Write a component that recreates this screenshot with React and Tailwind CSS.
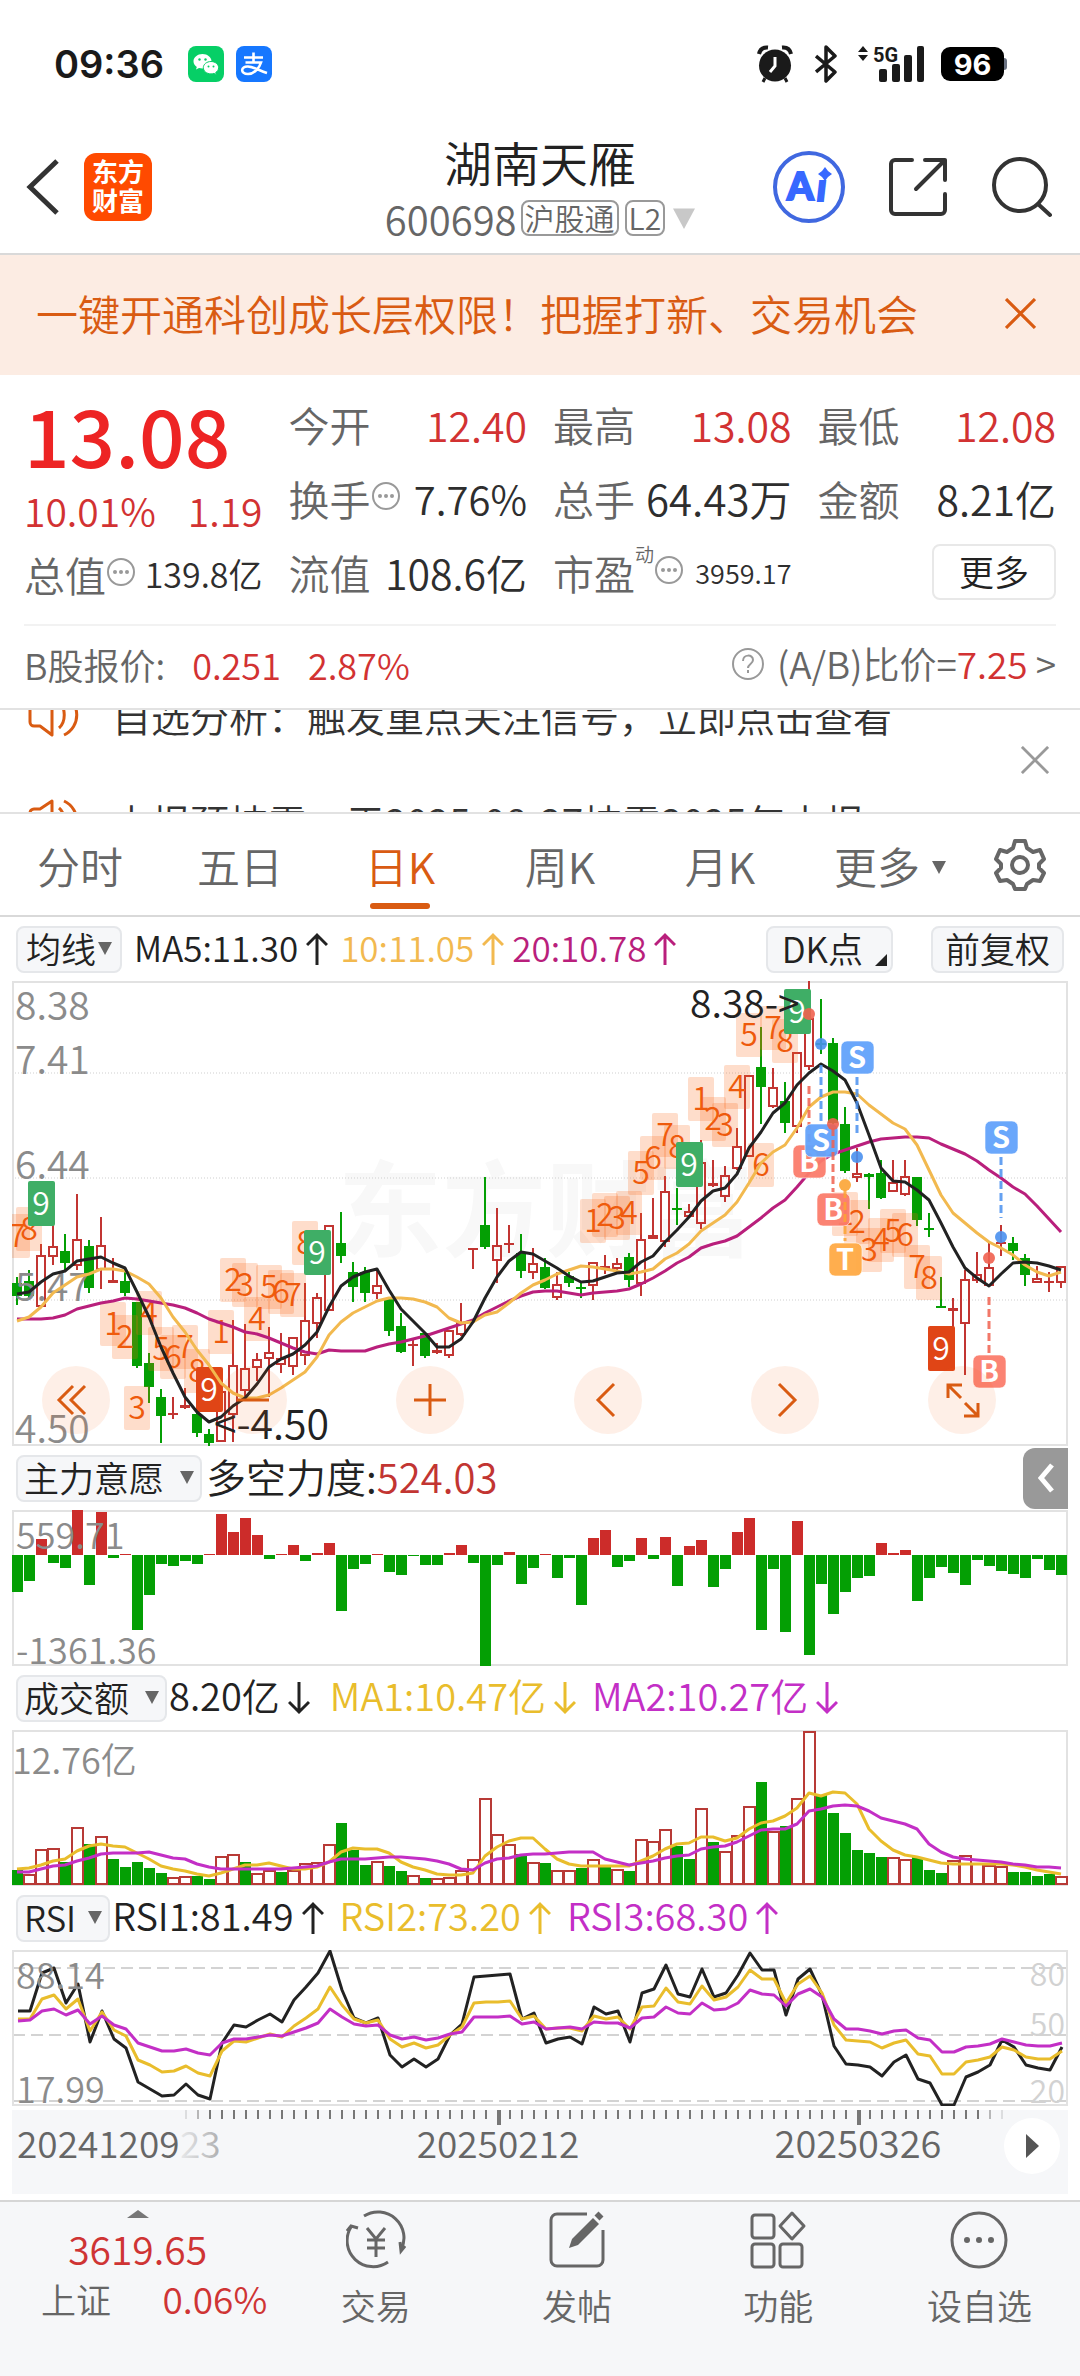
import React from "react";

const RED = "#c23532";
const GREEN = "#049f04";
const GRID = "#e2e2e2";
const ACCENT = "#d95b12";

const cx = (i) => 5 + 12 * i;

/* Price panel: [r|g, high, body top, body bottom, low], on a vertical scale of three steps per unit */
const candles = [
  ["g", 920, 938, 978, 1006], ["g", 900, 933, 978, 985], ["r", 822, 855, 1010, 1010], ["r", 765, 828, 860, 886],
  ["g", 792, 842, 880, 900], ["r", 672, 806, 888, 900], ["g", 810, 828, 955, 970], ["r", 740, 825, 900, 958],
  ["r", 865, 930, 940, 940], ["g", 895, 932, 970, 978], ["g", 995, 995, 1188, 1193], ["g", 1150, 1180, 1252, 1298],
  ["g", 1258, 1282, 1338, 1420], ["r", 1282, 1332, 1332, 1346], ["r", 1255, 1305, 1315, 1318], ["g", 1325, 1332, 1390, 1400],
  ["g", 1378, 1392, 1420, 1430], ["r", 1262, 1262, 1417, 1417], ["r", 1050, 1185, 1335, 1415], ["r", 1062, 1193, 1263, 1282],
  ["r", 1150, 1166, 1193, 1232], ["r", 1070, 1146, 1168, 1282], ["r", 1088, 1165, 1185, 1210], ["r", 1100, 1100, 1190, 1215],
  ["r", 940, 1050, 1158, 1185], ["r", 968, 980, 1062, 1105], ["r", 765, 765, 1022, 1022], ["g", 725, 820, 858, 878],
  ["g", 876, 907, 950, 995], ["g", 892, 905, 970, 995], ["r", 900, 946, 972, 988], ["g", 985, 985, 1083, 1097],
  ["g", 1030, 1068, 1145, 1148], ["r", 1105, 1125, 1125, 1188], ["g", 1088, 1088, 1157, 1165], ["r", 1120, 1140, 1146, 1153],
  ["r", 1080, 1080, 1158, 1165], ["r", 1000, 1055, 1095, 1098], ["r", 836, 836, 836, 898], ["g", 622, 766, 832, 838],
  ["r", 715, 825, 872, 938], ["r", 766, 822, 822, 850], ["g", 792, 848, 902, 925], ["r", 835, 878, 908, 928],
  ["g", 865, 892, 955, 958], ["r", 905, 942, 985, 990], ["g", 907, 918, 938, 950], ["g", 935, 955, 955, 983],
  ["r", 875, 875, 948, 990], ["r", 855, 888, 895, 912], ["r", 865, 880, 898, 910], ["g", 850, 862, 930, 950],
  ["r", 730, 806, 942, 978], ["r", 685, 795, 807, 808], ["r", 618, 662, 815, 830], ["g", 655, 717, 717, 765],
  ["r", 703, 723, 740, 745], ["r", 510, 577, 762, 778], ["r", 570, 640, 645, 650], ["r", 588, 615, 682, 695],
  ["r", 475, 528, 597, 600], ["r", 315, 315, 560, 560], ["g", 172, 292, 350, 462], ["r", 295, 352, 410, 415],
  ["g", 335, 393, 458, 488], ["r", 245, 245, 470, 490], ["r", 33, 143, 290, 300], ["g", 88, 222, 222, 252],
  ["g", 203, 218, 458, 465], ["g", 412, 462, 603, 608], ["r", 533, 610, 625, 635], ["g", 610, 612, 622, 717],
  ["g", 570, 608, 683, 688], ["r", 570, 635, 665, 667], ["r", 570, 618, 675, 677], ["g", 622, 622, 750, 768],
  ["g", 730, 776, 776, 802], ["g", 920, 1010, 1010, 1013], ["r", 985, 1013, 1022, 1070], ["r", 900, 928, 1062, 1215],
  ["r", 845, 912, 932, 938], ["r", 820, 890, 948, 950], ["r", 765, 818, 818, 858], ["g", 800, 818, 842, 870],
  ["g", 852, 865, 915, 948], ["r", 888, 925, 938, 940], ["r", 905, 937, 937, 965], ["r", 887, 887, 940, 955],
];

const ma5 = [973, 965, 935, 913, 903, 872, 866, 860, 878, 895, 965, 1040, 1130, 1210, 1280, 1325, 1356, 1342, 1308, 1283, 1243, 1190, 1168, 1153, 1125, 1085, 1010, 947, 920, 905, 898, 960, 1018, 1053, 1090, 1130, 1130, 1108, 1055, 985, 922, 872, 845, 852, 872, 895, 918, 935, 934, 922, 908, 905, 876, 858, 815, 780, 740, 692, 662, 653, 612, 535, 485, 430, 400, 345, 310, 283, 303, 329, 400, 495, 595, 632, 635, 660, 690, 760, 830, 893, 925, 948, 912, 878, 877, 879, 887, 900];
const ma10 = [1052, 1040, 1010, 970, 945, 922, 912, 898, 897, 902, 920, 943, 985, 1040, 1085, 1140, 1185, 1240, 1268, 1284, 1283, 1275, 1255, 1230, 1205, 1160, 1095, 1055, 1030, 1010, 992, 983, 983, 986, 995, 1010, 1045, 1060, 1055, 1035, 1025, 1000, 970, 945, 930, 912, 900, 888, 891, 897, 904, 913, 907, 896, 868, 848, 823, 783, 760, 735, 695, 640, 580, 545, 525, 475, 412, 380, 367, 365, 372, 405, 433, 460, 478, 525, 600, 675, 728, 760, 790, 817, 835, 855, 885, 905, 918, 907];
const ma20 = [1046, 1048, 1048, 1044, 1034, 1018, 1008, 998, 992, 984, 986, 992, 998, 1005, 1014, 1030, 1046, 1060, 1072, 1085, 1093, 1103, 1118, 1135, 1145, 1152, 1141, 1142, 1143, 1144, 1132, 1123, 1115, 1106, 1098, 1086, 1073, 1062, 1050, 1030, 1012, 993, 979, 966, 963, 962, 968, 974, 970, 967, 963, 957, 942, 923, 902, 880, 860, 835, 823, 813, 797, 772, 745, 715, 690, 650, 610, 572, 552, 540, 528, 516, 508, 503, 501, 501, 503, 522, 538, 553, 572, 600, 625, 650, 673, 708, 748, 787];

/* Sequence counters: [candle index, digit, top] */
const counters = [
  [0, "7", 732], [1, "8", 712], [8, "1", 995], [9, "2", 1035], [10, "3", 1248], [11, "4", 963], [12, "5", 1072], [13, "6", 1095],
  [14, "7", 1066], [15, "8", 1137], [17, "1", 1020], [18, "2", 864], [19, "3", 878], [20, "4", 980], [21, "5", 885],
  [22, "6", 900], [23, "7", 910], [24, "8", 752], [48, "1", 688], [49, "2", 670], [50, "3", 677], [51, "4", 662],
  [52, "5", 542], [53, "6", 498], [54, "7", 430], [55, "8", 466], [57, "1", 321], [58, "2", 382], [59, "3", 400],
  [60, "4", 286], [61, "5", 130], [62, "6", 518], [63, "7", 108], [64, "8", 146], [69, "1", 665], [70, "2", 690],
  [71, "3", 775], [72, "4", 743], [73, "5", 718], [74, "6", 730], [75, "7", 825], [76, "8", 857],
];
const nines = [[2, "#3fae66", 633], [16, "#e04516", 1190], [25, "#3fae66", 780], [56, "#3fae66", 515], [65, "#3fae66", 58], [77, "#e04516", 1067]];

/* Trade signals: [candle index, letter, badge top, dot, dash from, dash to] */
const signals = [
  [66, "B", 524, 133, 348, 524], [67, "S", 463, 222, 285, 463], [68, "B", 670, 462, 475, 665], [70, "S", 214, 560, 320, 490],
  [69, "T", 820, 645, 660, 812], [82, "S", 454, 802, 560, 745], [81, "B", 1156, 864, 980, 1150],
];
const signalFill = { B: "#fb7c6c", S: "#62a2fb", T: "#ffaa45" };
const signalDot = { B: "#f0604f", S: "#4a90ee", T: "#fba434" };

const force = [456, 422, 297, 368, 384, 210, 435, 215, 354, 342, 569, 464, 371, 377, 364, 373, 343, 223, 277, 233, 285, 357, 343, 315, 363, 339, 308, 514, 388, 372, 343, 397, 405, 349, 375, 376, 339, 315, 370, 677, 374, 336, 432, 384, 343, 413, 353, 495, 293, 270, 381, 363, 293, 358, 292, 438, 317, 301, 441, 387, 276, 234, 569, 388, 575, 244, 644, 431, 521, 456, 413, 409, 308, 340, 330, 484, 413, 381, 399, 434, 360, 377, 393, 403, 414, 356, 391, 404];

const volume = [-1290, 1303, 1228, 1225, -1265, 1162, -1213, 1187, -1257, -1281, -1266, -1284, -1298, 1311, 1307, -1308, -1317, 1247, 1241, -1267, 1300, 1290, -1297, 1290, 1268, 1265, 1211, -1150, -1229, -1275, 1262, -1278, -1293, 1305, -1314, 1314, 1312, 1290, 1256, 1073, 1182, 1212, -1242, 1266, -1269, 1290, 1290, -1284, 1256, -1280, 1286, -1293, 1196, 1202, 1168, -1217, -1257, 1105, -1206, 1234, 1184, 1097, -1026, 1174, -1158, 1073, 872, -1066, -1119, -1179, -1230, -1240, -1251, 1252, 1256, -1250, -1290, -1299, 1259, 1244, 1270, 1275, 1278, -1296, -1296, -1308, -1302, 1307];
const vma1 = [1286, 1285, 1275, 1263, 1258, 1233, 1217, 1212, 1217, 1220, 1238, 1258, 1278, 1286, 1293, 1302, 1308, 1300, 1288, 1275, 1274, 1270, 1278, 1286, 1287, 1280, 1266, 1236, 1223, 1227, 1227, 1240, 1265, 1282, 1290, 1302, 1305, 1304, 1298, 1248, 1220, 1203, 1193, 1193, 1228, 1257, 1273, 1278, 1278, 1278, 1278, 1278, 1262, 1249, 1228, 1213, 1209, 1191, 1191, 1203, 1195, 1167, 1149, 1143, 1129, 1103, 1058, 1068, 1055, 1058, 1092, 1167, 1203, 1229, 1245, 1250, 1260, 1268, 1272, 1271, 1271, 1272, 1272, 1275, 1282, 1290, 1295, 1302];
const vma2 = [1295, 1295, 1288, 1279, 1276, 1262, 1254, 1243, 1239, 1239, 1239, 1236, 1245, 1254, 1258, 1272, 1282, 1287, 1287, 1286, 1287, 1287, 1286, 1285, 1282, 1277, 1266, 1257, 1257, 1257, 1253, 1250, 1250, 1253, 1257, 1264, 1272, 1286, 1290, 1268, 1258, 1253, 1246, 1243, 1241, 1238, 1236, 1236, 1236, 1256, 1266, 1275, 1269, 1263, 1254, 1248, 1245, 1226, 1220, 1217, 1207, 1187, 1170, 1168, 1168, 1152, 1113, 1107, 1098, 1095, 1098, 1114, 1134, 1143, 1152, 1168, 1212, 1237, 1251, 1257, 1260, 1263, 1266, 1272, 1275, 1280, 1281, 1284];

const rsi1 = [393, 393, 278, 263, 370, 312, 487, 393, 476, 503, 605, 626, 648, 644, 613, 645, 657, 490, 435, 442, 420, 403, 425, 361, 322, 280, 212, 330, 414, 430, 415, 524, 560, 538, 560, 537, 465, 433, 291, 288, 285, 282, 418, 400, 490, 478, 471, 493, 382, 401, 394, 487, 338, 328, 255, 342, 350, 267, 352, 338, 286, 220, 269, 270, 404, 298, 267, 345, 497, 551, 555, 561, 587, 547, 525, 597, 608, 676, 676, 592, 575, 555, 480, 500, 554, 563, 570, 500];
const rsi2 = [418, 417, 357, 345, 387, 357, 453, 397, 450, 468, 540, 556, 576, 573, 559, 580, 587, 512, 483, 486, 474, 463, 470, 438, 415, 388, 320, 375, 418, 430, 420, 478, 500, 490, 503, 495, 465, 440, 370, 367, 366, 363, 416, 407, 446, 445, 443, 452, 408, 416, 411, 447, 380, 377, 325, 366, 371, 317, 361, 352, 320, 271, 296, 297, 370, 311, 289, 340, 436, 479, 483, 486, 503, 489, 480, 521, 528, 581, 581, 547, 540, 530, 500, 510, 530, 536, 537, 512];
const rsi3 = [422, 421, 394, 388, 405, 391, 432, 407, 435, 446, 490, 501, 514, 513, 507, 520, 525, 490, 476, 477, 471, 466, 469, 457, 445, 430, 387, 412, 433, 438, 436, 465, 477, 472, 480, 475, 462, 456, 412, 411, 410, 408, 431, 427, 447, 444, 442, 447, 427, 430, 429, 443, 414, 410, 382, 400, 401, 370, 391, 386, 368, 331, 343, 344, 379, 343, 327, 350, 417, 446, 448, 452, 462, 454, 450, 475, 480, 516, 516, 500, 497, 492, 478, 485, 495, 498, 499, 488];

function Line({ data, origin, color, dx = 0, width = 3 }) {
  const points = data.map((v, i) => `${cx(i) + dx},${Math.round((v - origin) / 3)}`).join(" ");
  return <polyline points={points} fill="none" stroke={color} strokeWidth={width} strokeLinejoin="round" />;
}

function Frame({ height }) {
  return <rect x="1" y="1" width="1054" height={height - 2} fill="none" stroke={GRID} strokeWidth="2" />;
}

function Label({ x, y, size = 36, fill = "#8b8b8b", anchor = "start", children }) {
  return (
    <text x={x} y={y} fontSize={size} fill={fill} textAnchor={anchor}>
      {children}
    </text>
  );
}

function PriceChart() {
  const y = (v) => Math.round((v - 33) / 3);
  return (
    <svg viewBox="0 0 1056 465" className="block w-full" role="img" aria-label="日K线图">
      <text x="326" y="268" fontSize="104" fontWeight="700" fill="#f8f8f8">东方财富</text>
      {[310, 625, 991].map((v) => (
        <line key={v} x1="0" x2="1056" y1={y(v)} y2={y(v)} stroke="#cfcfcf" strokeWidth="1" strokeDasharray="1 2" />
      ))}
      <Frame height={465} />
      {candles.map(([k, hi, top, bottom, lo], i) => {
        const c = k === "r" ? RED : GREEN;
        const x = cx(i);
        if (bottom - top < 2)
          return <path key={i} d={`M${x} ${y(hi)}V${y(lo)}M${x - 5} ${y(top)}H${x + 5}`} stroke={c} strokeWidth="2" fill="none" />;
        return (
          <g key={i} stroke={c} strokeWidth="2" fill={k === "r" ? "none" : c}>
            <path d={`M${x} ${y(hi)}V${y(top)}M${x} ${y(bottom)}V${y(lo)}`} />
            <rect x={x - 4} y={y(top) + 1} width="8" height={Math.max(1, y(bottom) - y(top) - 2)} />
          </g>
        );
      })}
      {[[8.38, 39], [7.41, 93], [6.44, 198], [5.47, 320], ["4.50", 462]].map(([t, ly]) => (
        <Label key={t} x={3} y={ly} size={39}>{t}</Label>
      ))}
      {counters.map(([i, d, top]) => (
        <g key={i}>
          <rect x={cx(i) - 13} y={y(top)} width="26" height="44" rx="2" fill="#fa6414" fillOpacity="0.22" />
          <text x={cx(i)} y={y(top) + 33} fontSize="32" fill="#ee5a0c" textAnchor="middle">{d}</text>
        </g>
      ))}
      {nines.map(([i, c, top]) => (
        <g key={i}>
          <rect x={cx(i) - 13} y={y(top)} width="27" height="45" rx="2" fill={c} />
          <text x={cx(i)} y={y(top) + 34} fontSize="32" fill="#fff" textAnchor="middle">9</text>
        </g>
      ))}
      <Line data={ma20} origin={33} color="#b91f7c" />
      <Line data={ma10} origin={33} color="#f2b94f" />
      <Line data={ma5} origin={33} color="#222" />
      {signals.map(([i, letter, top, dot, from, to]) => (
        <g key={i}>
          <line x1={cx(i)} x2={cx(i)} y1={y(from)} y2={y(to)} stroke={signalDot[letter]} strokeOpacity="0.85" strokeWidth="3" strokeDasharray="8 4" />
          <circle cx={cx(i)} cy={y(dot)} r="6" fill={signalDot[letter]} fillOpacity="0.9" />
          <rect x={cx(i) - 16} y={y(top)} width="33" height="33" rx="6" fill={signalFill[letter]} fillOpacity="0.95" stroke="#fff" strokeOpacity="0.6" />
          <text x={cx(i)} y={y(top) + 27} fontSize="29" fontWeight="700" fill="#fff" textAnchor="middle">{letter}</text>
        </g>
      ))}
      <Label x={678} y={37} size={39} fill="#222">8.38-&gt;</Label>
      <Label x={202} y={458} size={41} fill="#222">&lt;-4.50</Label>
    </svg>
  );
}

function ForceChart() {
  return (
    <svg viewBox="0 0 1056 156" className="block w-full" role="img" aria-label="主力意愿">
      <Frame height={156} />
      {force.map((v, i) => {
        const end = Math.round((v - 210) / 3);
        const up = end < 45;
        return (
          <rect key={i} x={cx(i) - 5} y={up ? end : 45} width="11" height={Math.max(1, Math.abs(end - 45))} fill={up ? "#cc2c2a" : GREEN} />
        );
      })}
      <Label x={4} y={39}>559.71</Label>
      <Label x={4} y={154}>-1361.36</Label>
    </svg>
  );
}

function VolumeChart() {
  return (
    <svg viewBox="0 0 1056 156" className="block w-full" role="img" aria-label="成交额">
      <Frame height={156} />
      {volume.map((v, i) => {
        const top = Math.round((Math.abs(v) - 870) / 3);
        return v < 0 ? (
          <rect key={i} x={cx(i) - 5} y={top} width="11" height={155 - top} fill={GREEN} />
        ) : (
          <rect key={i} x={cx(i) - 5} y={top + 1} width="11" height={153 - top} fill="#fff" stroke="#b83a36" strokeWidth="2" />
        );
      })}
      <Line data={vma1} origin={870} color="#e9bd2c" />
      <Line data={vma2} origin={870} color="#c32fc6" />
      <Label x={0} y={44}>12.76亿</Label>
    </svg>
  );
}

function RsiChart() {
  return (
    <svg viewBox="0 0 1056 156" className="block w-full" role="img" aria-label="RSI">
      {[18, 85, 151].map((v) => (
        <line key={v} x1="1" x2="1055" y1={v} y2={v} stroke="#d3d3d3" strokeWidth="2" strokeDasharray="12 6" />
      ))}
      <Frame height={156} />
      <Line data={rsi1} origin={210} color="#222" dx={1} />
      <Line data={rsi2} origin={210} color="#e9bd2c" dx={1} />
      <Line data={rsi3} origin={210} color="#c32fc6" dx={1} />
      <Label x={4} y={39}>88.14</Label>
      <Label x={4} y={153}>17.99</Label>
      <Label x={1053} y={36} size={32} fill="#d2d2d2" anchor="end">80</Label>
      <Label x={1053} y={86} size={32} fill="#d2d2d2" anchor="end">50</Label>
      <Label x={1053} y={153} size={32} fill="#d2d2d2" anchor="end">20</Label>
    </svg>
  );
}

function TimeAxis() {
  const ticks = Array.from({ length: 69 }, (_, k) => k + 14);
  return (
    <div className="relative mt-1 bg-[#f6f7f9]">
      <svg viewBox="0 0 1056 84" className="block w-full" role="img" aria-label="时间轴">
        <defs>
          <linearGradient id="fade" x1="0" x2="1" y1="0" y2="0">
            <stop offset="0" stopColor="#666" stopOpacity="0.1" />
            <stop offset="1" stopColor="#666" stopOpacity="0.5" />
          </linearGradient>
        </defs>
        {ticks.map((i) => {
          const major = i === 40 || i === 70;
          const edge = Math.min(i - 13, 83 - i);
          return (
            <rect key={i} x={cx(i)} y="0" width={major ? 4 : 2} height={major ? 15 : 9} fill="#777" fillOpacity={edge === 1 ? 0.2 : edge === 2 ? 0.5 : 1} />
          );
        })}
        <Label x={5} y={48} size={37} fill="#666">20241209</Label>
        <Label x={168} y={48} size={37} fill="url(#fade)">23</Label>
        <Label x={486} y={48} size={37} fill="#666" anchor="middle">20250212</Label>
        <Label x={846} y={48} size={38} fill="#666" anchor="middle">20250326</Label>
      </svg>
      <button aria-label="播放" className="absolute right-2 top-2 flex h-14 w-14 items-center justify-center rounded-full bg-white">
        <svg width="14" height="24" viewBox="0 0 14 24"><path d="M1 0v24L14 12z" fill="#555" /></svg>
      </button>
    </div>
  );
}

function Caret({ size = 14, color = "#666" }) {
  return (
    <svg width={size} height={size} viewBox="0 0 14 14" aria-hidden="true">
      <path d="M0 1h14L7 14z" fill={color} />
    </svg>
  );
}

function Chip({ children, className = "" }) {
  return (
    <button className={`flex h-[47px] items-center rounded-lg border-2 border-[#e5e7ea] bg-[#f6f7f9] pb-[3px] text-[35px] leading-none text-[#222] ${className}`}>
      {children}
    </button>
  );
}

function Arrow({ up, color }) {
  return (
    <svg width="22" height="34" viewBox="0 0 22 34" fill="none" stroke={color} strokeWidth="3" aria-hidden="true">
      {up ? <path d="M11 33V3M1 13L11 3l10 10" /> : <path d="M11 1v30M1 21l10 10 10-10" />}
    </svg>
  );
}

function Reading({ color, up, children, className = "" }) {
  return (
    <span className={`flex items-center gap-2 ${className}`} style={{ color }}>
      <span className="pb-[6px]">{children}</span>
      <Arrow up={up} color={color} />
    </span>
  );
}

function Dots() {
  return (
    <svg width="30" height="30" viewBox="0 0 30 30" className="mb-1 shrink-0" aria-hidden="true">
      <circle cx="15" cy="15" r="13" fill="none" stroke="#999" strokeWidth="2" />
      <circle cx="9" cy="15" r="2" fill="#999" /><circle cx="15" cy="15" r="2" fill="#999" /><circle cx="21" cy="15" r="2" fill="#999" />
    </svg>
  );
}

function Stat({ label, info, sup, value, color = "text-[#2e2e2e]", size = "text-[42px]" }) {
  return (
    <div className="flex h-[74px] items-center justify-between whitespace-nowrap leading-none">
      <dt className="flex items-center text-[41px] text-[#666]">
        {label}
        {sup && <sup className="top-0 -mt-2 self-start text-[19px] leading-none">{sup}</sup>}
        {info && <Dots />}
      </dt>
      <dd className={`${size} ${color}`}>{value}</dd>
    </div>
  );
}

function StatusBar() {
  return (
    <div className="flex h-32 items-center justify-between pl-[54px] pr-[73px] text-[#1a1a1a]">
      <div className="flex items-center gap-3">
        <span className="mr-3 font-['Inter',sans-serif] text-[38px] font-semibold leading-none">09:36</span>
        <svg width="36" height="36" viewBox="0 0 36 36" aria-label="微信">
          <rect width="36" height="36" rx="8" fill="#06cf66" />
          <path d="M14.500 8C9.500 8 5.500 11.300 5.500 15.300c0 2.300 1.300 4.300 3.300 5.600l-.8 2.700 3-1.600c1 .3 2.200.5 3.500.5 5 0 9-3.200 9-7.200S19.500 8 14.500 8z" fill="#fff" />
          <path d="M23 15.500c-4.300 0-7.700 2.800-7.700 6.200s3.400 6.200 7.700 6.200c1 0 2-.2 2.900-.5l2.500 1.300-.7-2.200c1.800-1.200 2.900-2.900 2.900-4.800 0-3.400-3.400-6.200-7.600-6.200z" fill="#fff" stroke="#06cf66" />
          <g fill="#06cf66"><circle cx="11.500" cy="13.500" r="1.200" /><circle cx="17.500" cy="13.500" r="1.200" /><circle cx="20.500" cy="20.500" r="1" /><circle cx="25.500" cy="20.500" r="1" /></g>
        </svg>
        <svg width="36" height="36" viewBox="0 0 36 36" aria-label="支付宝">
          <rect width="36" height="36" rx="8" fill="#1677ff" />
          <g fill="none" stroke="#fff" strokeWidth="2.600">
            <path d="M8 11.500h19M17.500 6.500v10M9.500 16.500h15.500c-1.500 5-6.500 11.500-13 11.500-8 0-7.500-8 0-7.500 6 .4 11 4 19 6.500" />
          </g>
        </svg>
      </div>
      <div className="flex items-center">
        <svg width="36" height="38" viewBox="0 0 36 38" fill="none" stroke="#1a1a1a" aria-label="闹钟">
          <circle cx="18" cy="20.500" r="16" fill="#1a1a1a" stroke="none" />
          <path d="M2 9C3 4 6 2 11 2.500M34 9C33 4 30 2 25 2.500" strokeWidth="4" />
          <path d="M8 33l-2 4M28 33l2 4" strokeWidth="3" />
          <path d="M18 12v9l-5 6" stroke="#fff" strokeWidth="3" />
        </svg>
        <svg width="22" height="38" viewBox="0 0 22 38" className="ml-[22px]" fill="none" stroke="#1a1a1a" strokeWidth="3.500" aria-label="蓝牙">
          <path d="M1 11l19 16-9 9V2l9 9L1 27" strokeLinejoin="round" />
        </svg>
        <svg width="66" height="38" viewBox="0 0 66 38" className="ml-[21px]" fill="#1a1a1a" aria-label="5G 信号">
          <path d="M0 7L5 1l5 6zM0 10L5 16l5-6z" />
          <text x="15" y="17" fontSize="20" fontWeight="700" fontFamily="Roboto">5G</text>
          <rect x="21" y="24" width="8" height="13" rx="2" /><rect x="34" y="19" width="8" height="18" rx="2" /><rect x="46" y="10" width="8" height="27" rx="2" /><rect x="59" y="1" width="7" height="36" rx="2" />
        </svg>
        <div className="ml-[17px] flex h-[34px] w-[63px] items-center justify-center rounded-[9px] bg-black font-['Inter',sans-serif] text-[29px] font-bold leading-none text-white">96</div>
        <div className="h-3 w-[3px] rounded-r bg-gray-500" />
      </div>
    </div>
  );
}

function Header() {
  return (
    <header className="grid h-[127px] grid-cols-[1fr_auto_1fr] border-b-2 border-[#d9d9d9] bg-white">
      <div className="flex h-[118px] items-center gap-6 pl-[26px]">
        <button aria-label="返回">
          <svg width="34" height="56" viewBox="0 0 34 56" fill="none" stroke="#333" strokeWidth="5"><path d="M31 2L4 28l27 26" /></svg>
        </button>
        <div className="flex h-[68px] w-[68px] flex-col items-center justify-center rounded-xl bg-[#ff4a00] pb-1 text-[26px] font-bold leading-[29px] text-white">
          <span>东方</span><span>财富</span>
        </div>
      </div>
      <div className="flex flex-col items-center">
        <h1 className="text-[48px] leading-[66px] text-[#222]">湖南天雁</h1>
        <button className="flex items-center gap-1 whitespace-nowrap text-[40px] leading-[48px] text-[#666]">
          <span>600698</span>
          <span className="flex h-9 items-center rounded-lg border-2 border-[#999] px-[2px] pb-[3px] text-[30px] leading-none">沪股通</span>
          <span className="ml-[2px] flex h-9 items-center rounded-lg border-2 border-[#999] px-[2px] pb-[3px] text-[30px] leading-none">L2</span>
          <span className="ml-1"><Caret size={22} color="#c8c8c8" /></span>
        </button>
      </div>
      <div className="flex h-[118px] items-center justify-end gap-[42px] pr-7">
        <button aria-label="Ai">
          <svg width="74" height="74" viewBox="0 0 74 74" aria-hidden="true">
            <circle cx="37" cy="37" r="34" fill="none" stroke="#4068e0" strokeWidth="4" />
            <text x="15" y="50" fontSize="38" fontWeight="900" fontFamily="Lato" fill="#3768ff" stroke="#3768ff" strokeWidth="2">A</text>
            <text x="45" y="51" fontSize="37" fontWeight="900" fontStyle="italic" fontFamily="Lato" fill="#3768ff" stroke="#3768ff" strokeWidth="2">ı</text>
            <path d="M53 17l3 4 4 3-4 3-3 4-3-4-4-3 4-3z" fill="#3768ff" />
          </svg>
        </button>
        <button aria-label="分享">
          <svg width="60" height="60" viewBox="0 0 60 60" fill="none" stroke="#333" strokeWidth="4" strokeLinecap="round" strokeLinejoin="round">
            <path d="M24 3H7a4 4 0 0 0-4 4v46a4 4 0 0 0 4 4h46a4 4 0 0 0 4-4V37M37 3h20v20M57 3L28 32" />
          </svg>
        </button>
        <button aria-label="搜索">
          <svg width="62" height="62" viewBox="0 0 62 62" fill="none" stroke="#333" strokeWidth="4" strokeLinecap="round">
            <circle cx="30" cy="29" r="26" /><path d="M48 48l12 11" />
          </svg>
        </button>
      </div>
    </header>
  );
}

function Cross({ size, color }) {
  return (
    <svg width={size} height={size} viewBox="0 0 30 30" fill="none" stroke={color} strokeWidth="3"><path d="M1 1l28 28M29 1L1 29" /></svg>
  );
}

function Speaker() {
  return (
    <svg width="52" height="44" viewBox="0 0 52 44" fill="none" stroke={ACCENT} strokeWidth="3" strokeLinejoin="round" className="shrink-0" aria-hidden="true">
      <path d="M12 10H6a4 4 0 0 0-4 4v15a4 4 0 0 0 4 4h6l12 9V2zM31 9c7 6 7 20 0 26M36 2c17 8 17 32 0 40" />
    </svg>
  );
}

function Quote() {
  return (
    <section className="bg-white px-6 pt-3">
      <div className="grid grid-cols-4 gap-x-[26px]">
        <div>
          <div className="h-24 text-[80px] font-medium leading-[92px] text-[#ed2424]">13.08</div>
          <div className="flex h-[54px] items-center justify-between text-[39px] leading-none text-[#d23232]">
            <span>10.01%</span><span>1.19</span>
          </div>
          <dl><Stat label="总值" info value="139.8亿" size="text-[34px]" /></dl>
        </div>
        <dl>
          <Stat label="今开" value="12.40" color="text-[#d23232]" size="text-[41px]" />
          <Stat label="换手" info value="7.76%" size="text-[40px]" />
          <Stat label="流值" value="108.6亿" size="text-[41px]" />
        </dl>
        <dl>
          <Stat label="最高" value="13.08" color="text-[#d23232]" size="text-[41px]" />
          <Stat label="总手" value="64.43万" />
          <Stat label="市盈" sup="动" info value="3959.17" size="text-[27px]" />
        </dl>
        <div>
          <dl>
            <Stat label="最低" value="12.08" color="text-[#d23232]" size="text-[41px]" />
            <Stat label="金额" value="8.21亿" size="text-[41px]" />
          </dl>
          <div className="flex h-[74px] items-center justify-end">
            <button className="h-14 w-[124px] rounded-lg border-2 border-[#e8e8e8] pb-1 text-[35px] leading-none text-[#222]">更多</button>
          </div>
        </div>
      </div>
      <div className="mt-[13px] flex h-[84px] items-center justify-between border-t-2 border-[#f2f2f2] pb-[7px] text-[36px] leading-none text-[#666]">
        <div className="flex gap-[27px]">
          <span>B股报价:</span><span className="text-[#d23232]">0.251</span><span className="text-[#d23232]">2.87%</span>
        </div>
        <a href="#ratio" className="flex items-center text-[37px]">
          <svg width="34" height="34" viewBox="0 0 34 34" className="mr-3" aria-hidden="true">
            <circle cx="17" cy="17" r="15" fill="none" stroke="#999" strokeWidth="2" />
            <path d="M12 14c0-7 10-7 10-1 0 4-5 4-5 8M17 23v3" fill="none" stroke="#999" strokeWidth="2" />
          </svg>
          (A/B)比价=<span className="text-[#d23232]">7.25</span>
          <span className="ml-2">&gt;</span>
        </a>
      </div>
    </section>
  );
}

function Notices() {
  return (
    <section className="relative h-[106px] overflow-hidden border-y-2 border-[#e2e2e2] bg-white text-[39px] leading-none text-[#333]">
      <div className="-mt-12 flex h-[106px] items-center gap-8 whitespace-nowrap px-7"><Speaker />自选分析：触发重点关注信号，立即点击查看</div>
      <div className="flex h-[106px] items-center gap-8 whitespace-nowrap px-7"><Speaker />中报预披露：于2025-08-27披露2025年中报</div>
      <button aria-label="关闭公告" className="absolute right-[31px] top-9"><Cross size={28} color="#999" /></button>
    </section>
  );
}

function Tabs() {
  const tabs = ["分时", "五日", "日K", "周K", "月K"];
  return (
    <nav className="grid h-[103px] grid-cols-[repeat(5,160fr)_180fr_100fr] border-b-2 border-[#d9d9d9] bg-white text-[43px] leading-none text-[#666]">
      {tabs.map((t) => {
        const on = t === "日K";
        return (
          <button key={t} className={`flex flex-col items-center pt-[30px] ${on ? "text-[#d95b12]" : ""}`}>
            {t}
            {on && <span className="mt-4 h-[6px] w-[60px] rounded-full bg-[#d95b12]" />}
          </button>
        );
      })}
      <button className="flex items-start justify-center gap-3 pt-[30px]">更多<span className="pt-4"><Caret /></span></button>
      <button aria-label="设置" className="flex items-start justify-center pr-5 pt-6">
        <svg width="54" height="54" viewBox="0 0 54 54" fill="none" stroke="#666" strokeWidth="4" strokeLinejoin="round">
          <path d="M22 3h10l2 7 6 4 7-2 4 9-5 5v4l5 5-4 8-7-1-6 4-2 5H22l-2-5-6-4-7 1-4-8 5-5v-4l-5-5 4-9 7 2 6-4z" />
          <circle cx="27" cy="27" r="8" />
        </svg>
      </button>
    </nav>
  );
}

function ChartControls() {
  const icons = [
    ["向前翻页", "M31 20L17 34l14 14M43 20L29 34l14 14"],
    ["缩小", "M18 34h32"],
    ["放大", "M18 34h32M34 18v32"],
    ["左移", "M40 18L24 34l16 16"],
    ["右移", "M28 18l16 16-16 16"],
    ["全屏", "M20 32V19h14M20 19l13 13M50 37v13H36M50 50L37 37"],
  ];
  return (
    <div className="absolute inset-x-0 bottom-3 flex justify-between pl-[30px] pr-[72px]">
      {icons.map(([name, d]) => (
        <button key={name} aria-label={name} className="h-[68px] w-[68px] rounded-full bg-[#fa6414]/10">
          <svg width="68" height="68" viewBox="0 0 68 68" fill="none" stroke={ACCENT} strokeWidth="3"><path d={d} /></svg>
        </button>
      ))}
    </div>
  );
}

const ROW = "flex h-16 items-center whitespace-nowrap pl-1 text-[38px] leading-none";

function Charts() {
  return (
    <main className="bg-white px-3">
      <div className="flex h-16 items-center whitespace-nowrap pl-1 text-[35px] leading-none">
        <Chip className="gap-[2px] px-2">均线<Caret /></Chip>
        <Reading up color="#222" className="ml-3">MA5:11.30</Reading>
        <Reading up color="#f2b94f" className="ml-3">10:11.05</Reading>
        <Reading up color="#b91f7c" className="ml-2">20:10.78</Reading>
        <Chip className="ml-auto mr-[38px] gap-3 pl-[14px] pr-1">DK点<svg width="12" height="12" viewBox="0 0 12 12" className="mt-6"><path d="M12 0v12H0z" fill="#222" /></svg></Chip>
        <Chip className="mr-1 px-3">前复权</Chip>
      </div>
      <div className="relative">
        <PriceChart />
        <ChartControls />
      </div>
      <div className={ROW}>
        <Chip className="gap-4 px-[6px]">主力意愿<Caret /></Chip>
        <span className="ml-1 pb-1 text-[40px] text-[#222]">多空力度:<span className="text-[#c23532]">524.03</span></span>
        <button aria-label="展开侧栏" className="ml-auto flex h-[61px] w-[45px] items-center justify-center rounded-l-xl bg-[#999]">
          <svg width="16" height="30" viewBox="0 0 16 30" fill="none" stroke="#fff" strokeWidth="5"><path d="M14 2L3 15l11 13" /></svg>
        </button>
      </div>
      <ForceChart />
      <div className={ROW}>
        <Chip className="gap-4 px-[6px]">成交额<Caret /></Chip>
        <Reading color="#222" className="ml-[2px]">8.20亿</Reading>
        <Reading color="#e9bd2c" className="ml-5">MA1:10.47亿</Reading>
        <Reading color="#c32fc6" className="ml-4">MA2:10.27亿</Reading>
      </div>
      <VolumeChart />
      <div className={ROW}>
        <Chip className="gap-3 px-[6px]">RSI<Caret /></Chip>
        <Reading up color="#222" className="ml-[2px]">RSI1:81.49</Reading>
        <Reading up color="#e9bd2c" className="ml-4">RSI2:73.20</Reading>
        <Reading up color="#c32fc6" className="ml-4">RSI3:68.30</Reading>
      </div>
      <RsiChart />
      <TimeAxis />
    </main>
  );
}

function BottomBar() {
  const items = [
    ["交易", <g key="a"><path d="M18 6A26 26 0 0 1 55 40M42 52A26 26 0 0 1 5 17M1 21l4-5 7 2M59 36l-4 5-1-9" /><path d="M21 18l9 11 9-11M30 29v18M21 30h18M21 38h18" /></g>],
    ["发帖", <g key="b"><path d="M40 4H10a6 6 0 0 0-6 6v40a6 6 0 0 0 6 6h40a6 6 0 0 0 6-6V20" /><path d="M22 38l3-9L46 8l6 6-21 21z" fill="#666" stroke="none" /><path d="M50 8l4-4" strokeWidth="7" /></g>],
    ["功能", <g key="c"><rect x="4" y="5" width="22" height="23" rx="3" /><path d="M44 3l12 13-12 13-12-13z" strokeLinejoin="round" /><rect x="4" y="34" width="22" height="23" rx="3" /><rect x="32" y="34" width="22" height="23" rx="3" /></g>],
    ["设自选", <g key="d"><circle cx="30" cy="30" r="27" /><g fill="#666" stroke="none"><circle cx="18" cy="30" r="3" /><circle cx="30" cy="30" r="3" /><circle cx="42" cy="30" r="3" /></g></g>],
  ];
  return (
    <footer className="mt-[6px] grid h-[176px] grid-cols-[275fr_201fr_201fr_201fr_201fr] border-t-2 border-[#d6d6d6] bg-[#f6f7f9] text-[35px] leading-none text-[#666]">
      <button className="flex flex-col items-center pt-2">
        <svg width="22" height="8" viewBox="0 0 22 8" aria-hidden="true"><path d="M11 0l11 8H0z" fill="#777" /></svg>
        <span className="mt-[11px] text-[39px] text-[#cf3434]">3619.65</span>
        <span className="mt-3 flex w-full items-center justify-between pl-[41px] pr-2">上证<span className="text-[37px] text-[#cf3434]">0.06%</span></span>
      </button>
      {items.map(([label, icon]) => (
        <button key={label} className="flex flex-col items-center pt-2">
          <svg width="60" height="60" viewBox="0 0 60 60" fill="none" stroke="#666" strokeWidth="3" aria-hidden="true">{icon}</svg>
          <span className="mt-[17px]">{label}</span>
        </button>
      ))}
    </footer>
  );
}

export default function App() {
  return (
    <div className="w-full bg-white font-['Noto_Sans_CJK_SC','Noto_Sans',sans-serif] font-[350]">
      <StatusBar />
      <Header />
      <div className="flex h-[120px] items-center justify-between bg-[#fcece3] pb-1 pl-9 pr-11 text-[42px] leading-none text-[#d95b12]">
        <span className="whitespace-nowrap">一键开通科创成长层权限！把握打新、交易机会</span>
        <button aria-label="关闭"><Cross size={31} color={ACCENT} /></button>
      </div>
      <Quote />
      <Notices />
      <Tabs />
      <Charts />
      <BottomBar />
    </div>
  );
}
